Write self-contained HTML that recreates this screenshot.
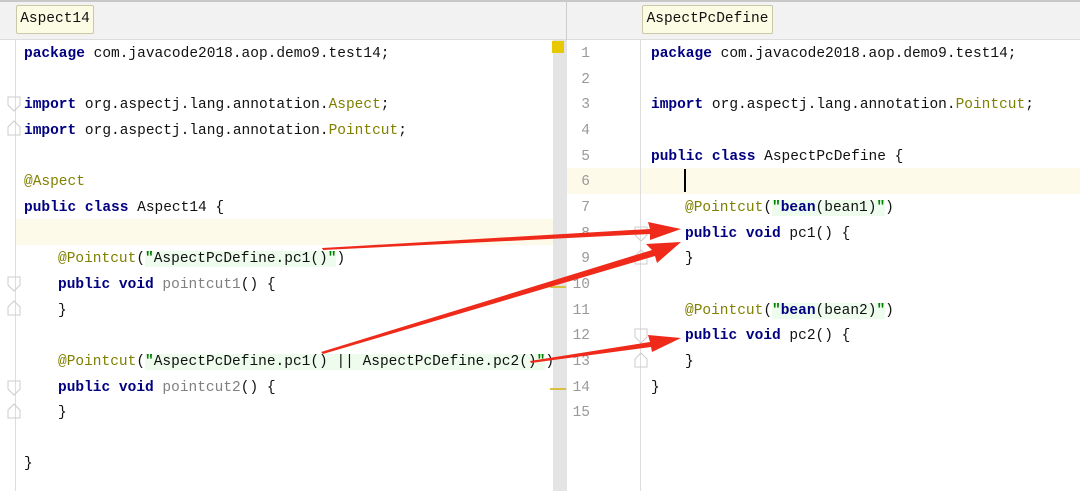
<!DOCTYPE html><html><head><style>
body{margin:0;width:1080px;height:491px;overflow:hidden;background:#fff;position:relative;font-family:"Liberation Mono","Noto Sans CJK SC",monospace;font-size:14.5px;color:#111}
.a{position:absolute}
.l{position:absolute;height:25.64px;line-height:25.64px;white-space:pre;margin-top:2px}
.k{color:#000080;font-weight:bold}.an{color:#808000}.g{color:#808080}
.s{background:#edfced}.q{color:#008000;font-weight:bold}
.n{position:absolute;width:40px;text-align:right;color:#999;height:25.64px;line-height:25.64px;left:550px;margin-top:2px}
</style></head><body>
<div class="a" style="left:0;top:0;width:1080px;height:40px;background:#f2f2f2;border-top:2px solid #c8c8c8;box-sizing:border-box;border-bottom:1px solid #ddd"></div>
<div class="a" style="left:16px;top:5px;width:78px;height:29px;background:#fcfce4;border:1px solid #c9c9a8;border-radius:2px;box-sizing:border-box;line-height:27px;text-align:center;font-size:14.5px">Aspect14</div>
<div class="a" style="left:642px;top:5px;width:131px;height:29px;background:#fcfce4;border:1px solid #c9c9a8;border-radius:2px;box-sizing:border-box;line-height:27px;text-align:center;font-size:14.5px">AspectPcDefine</div>
<div class="a" style="left:566px;top:0;width:1px;height:40px;background:#ccc"></div>
<div class="a" style="left:15px;top:40px;width:1px;height:451px;background:#ddd"></div>
<div class="a" style="left:16px;top:219px;width:537px;height:26px;background:#fdfaea"></div>
<div class="a" style="left:553px;top:40px;width:14px;height:451px;background:#e4e4e4"></div>
<div class="a" style="left:552px;top:41px;width:12px;height:12px;background:#e8c800"></div>
<div class="a" style="left:550px;top:286px;width:16px;height:2px;background:#d8c040"></div>
<div class="a" style="left:550px;top:388px;width:16px;height:2px;background:#d8c040"></div>
<div class="a" style="left:567px;top:168px;width:513px;height:26px;background:#fdfaea"></div>
<div class="a" style="left:640px;top:40px;width:1px;height:451px;background:#ddd"></div>
<div class="a" style="left:684px;top:169px;width:2px;height:23px;background:#000"></div>
<div class="n" style="top:40px">1</div><div class="n" style="top:66px">2</div><div class="n" style="top:91px">3</div><div class="n" style="top:117px">4</div><div class="n" style="top:143px">5</div><div class="n" style="top:168px">6</div><div class="n" style="top:194px">7</div><div class="n" style="top:220px">8</div><div class="n" style="top:245px">9</div><div class="n" style="top:271px">10</div><div class="n" style="top:297px">11</div><div class="n" style="top:322px">12</div><div class="n" style="top:348px">13</div><div class="n" style="top:374px">14</div><div class="n" style="top:399px">15</div>
<div class="l" style="left:24px;top:40px"><span class="k">package</span> com.javacode2018.aop.demo9.test14;</div>
<div class="l" style="left:24px;top:91px"><span class="k">import</span> org.aspectj.lang.annotation.<span class="an">Aspect</span>;</div>
<div class="l" style="left:24px;top:117px"><span class="k">import</span> org.aspectj.lang.annotation.<span class="an">Pointcut</span>;</div>
<div class="l" style="left:24px;top:168px"><span class="an">@Aspect</span></div>
<div class="l" style="left:24px;top:194px"><span class="k">public class</span> Aspect14 {</div>
<div class="l" style="left:58px;top:245px"><span class="an">@Pointcut</span>(<span class="s"><span class="q">"</span>AspectPcDefine.pc1()<span class="q">"</span></span>)</div>
<div class="l" style="left:58px;top:271px"><span class="k">public void</span> <span class="g">pointcut1</span>() {</div>
<div class="l" style="left:58px;top:297px">}</div>
<div class="l" style="left:58px;top:348px"><span class="an">@Pointcut</span>(<span class="s"><span class="q">"</span>AspectPcDefine.pc1() || AspectPcDefine.pc2()<span class="q">"</span></span>)</div>
<div class="l" style="left:58px;top:374px"><span class="k">public void</span> <span class="g">pointcut2</span>() {</div>
<div class="l" style="left:58px;top:399px">}</div>
<div class="l" style="left:24px;top:450px">}</div>
<div class="l" style="left:651px;top:40px"><span class="k">package</span> com.javacode2018.aop.demo9.test14;</div>
<div class="l" style="left:651px;top:91px"><span class="k">import</span> org.aspectj.lang.annotation.<span class="an">Pointcut</span>;</div>
<div class="l" style="left:651px;top:143px"><span class="k">public class</span> AspectPcDefine {</div>
<div class="l" style="left:685px;top:194px"><span class="an">@Pointcut</span>(<span class="s"><span class="q">"</span><span class="k">bean</span>(bean1)<span class="q">"</span></span>)</div>
<div class="l" style="left:685px;top:220px"><span class="k">public void</span> pc1() {</div>
<div class="l" style="left:685px;top:245px">}</div>
<div class="l" style="left:685px;top:297px"><span class="an">@Pointcut</span>(<span class="s"><span class="q">"</span><span class="k">bean</span>(bean2)<span class="q">"</span></span>)</div>
<div class="l" style="left:685px;top:322px"><span class="k">public void</span> pc2() {</div>
<div class="l" style="left:685px;top:348px">}</div>
<div class="l" style="left:651px;top:374px">}</div>
<svg class="a" style="left:0;top:0" width="1080" height="491">
<g fill="none" stroke="#ccc"><path d="M8 97h12v8l-6 6-6-6z M8 135h12v-8l-6-6-6 6z M8 277h12v8l-6 6-6-6z M8 315h12v-8l-6-6-6 6z M8 381h12v8l-6 6-6-6z M8 418h12v-8l-6-6-6 6z M635 227h12v8l-6 6-6-6z M635 264h12v-8l-6-6-6 6z M635 329h12v8l-6 6-6-6z M635 367h12v-8l-6-6-6 6z"/></g>
<g fill="#f02a1a">
<polygon points="322,248 650,229 648,222 681,229 650,240 650,234 323,250"/>
<polygon points="321,352 652,250 646,244 681,242 657,263 655,256 323,354"/>
<polygon points="530,361 650,342 648,335 681,338 652,352 651,347 531,363"/>
</g></svg>
</body></html>
